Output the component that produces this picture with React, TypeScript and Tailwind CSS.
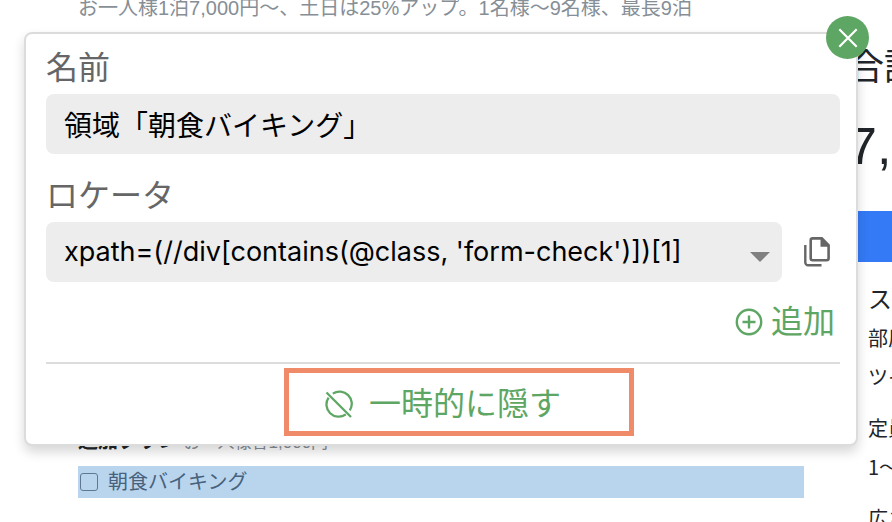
import { useState } from 'react'

const locators = ["xpath=(//div[contains(@class, 'form-check')])[1]"]

function CopyIcon() {
  return (
    <svg viewBox="0 0 26 30" className="h-[30px] w-[26px]" fill="none" aria-hidden="true">
      <path d="M1.3 8v17.5a2.8 2.8 0 0 0 2.8 2.8H17.5" stroke="#666" strokeWidth="2.4" />
      <path
        d="M8.7 1.4h9.1l6.8 6.8v13a2 2 0 0 1-2 2H8.7a2 2 0 0 1-2-2V3.4a2 2 0 0 1 2-2z"
        stroke="#666"
        strokeWidth="2.6"
      />
      <path d="M16.5 1v8.8H25L17.8 1z" fill="#666" />
    </svg>
  )
}

function AddIcon() {
  return (
    <svg viewBox="0 0 28 28" className="size-7" fill="none" stroke="currentColor" strokeWidth="2.4" aria-hidden="true">
      <circle cx="14" cy="14" r="12.2" />
      <path d="M14 7.5v13M7.5 14h13" />
    </svg>
  )
}

function HideIcon() {
  return (
    <svg viewBox="0 0 28 28" className="size-7" fill="none" stroke="currentColor" strokeWidth="2.3" aria-hidden="true">
      <path d="M1.5 2.5 26 27" />
      <path d="M7.8 3.6A12.2 12.2 0 0 1 24.8 20.4" />
      <path d="M3.6 7.6A12.2 12.2 0 0 0 20.8 24.4" />
    </svg>
  )
}

function ReservePage() {
  return (
    <>
      <main className="min-w-0 flex-1 pr-11 pl-[78px] text-[20px] whitespace-nowrap">
        <p className="leading-4 text-[#868e96]">
          お一人様1泊7,000円〜、土日は25%アップ。1名様〜9名様、最長9泊
        </p>
        <h3 className="mt-[410px] h-[30px] leading-[30px] font-bold text-[#212529]">
          追加プラン <small className="text-[17px] font-normal text-[#868e96]">お一人様各1,000円</small>
        </h3>
        <label className="mt-[10px] flex h-8 items-center gap-2.5 bg-[#b9d5ee] pl-0.5 text-[#48617c]">
          <input
            type="checkbox"
            className="size-[18px] appearance-none rounded-[3px] border border-[#5f7891] checked:bg-[#5f7891]"
          />
          朝食バイキング
        </label>
      </main>

      <aside className="w-11 shrink-0 overflow-hidden pt-12 whitespace-nowrap text-[#212529]">
        <p className="text-[36px] leading-10">合計</p>
        <p className="mt-7 text-[52px] leading-[60px]">7,000円</p>
        <button type="button" aria-label="予約" className="mt-[35px] block h-[51px] w-full bg-[#347af6]" />
        <div className="pl-5 font-['Noto_Sans_CJK_JP',sans-serif] text-[20px] leading-[39px]">
          <h2 className="mt-5 text-[24px] leading-8 font-normal">スタンダードツイン</h2>
          <dl className="mt-1 space-y-3">
            <div>
              <dt>部屋</dt>
              <dd>ツイン</dd>
            </div>
            <div>
              <dt>定員</dt>
              <dd>1〜2</dd>
            </div>
            <div>
              <dt>広さ</dt>
            </div>
          </dl>
        </div>
      </aside>
    </>
  )
}

function LocatorPopup({ onClose }: { onClose: () => void }) {
  const [name, setName] = useState('領域「朝食バイキング」')

  return (
    <section className="absolute top-8 right-[34px] left-6 rounded-lg border-2 border-[#dcdcdc] bg-white pt-2 pr-4 pb-2 pl-5 shadow-[0_6px_12px_rgba(0,0,0,0.16)]">
      <button
        type="button"
        aria-label="閉じる"
        onClick={onClose}
        className="absolute -top-[18px] -right-[13px] flex size-[43px] items-center justify-center rounded-full bg-[#5ea664] text-white"
      >
        <svg viewBox="0 0 20 20" className="size-5" stroke="currentColor" strokeWidth="2.2" aria-hidden="true">
          <path d="M1.3 1.3 18.7 18.7M18.7 1.3 1.3 18.7" />
        </svg>
      </button>

      <label htmlFor="name" className="block text-[32px] leading-[52px] text-[#666]">
        名前
      </label>
      <input
        id="name"
        value={name}
        onChange={(e) => setName(e.target.value)}
        className="block h-[60px] w-full rounded-lg bg-[#ededed] px-[18px] text-[28px] text-black outline-none"
      />

      <label htmlFor="locator" className="mt-4 block text-[32px] leading-[52px] text-[#666]">
        ロケータ
      </label>
      <div className="flex items-center gap-[22px]">
        <div className="relative min-w-0 flex-1">
          <select
            id="locator"
            className="block h-[60px] w-full appearance-none rounded-lg bg-[#ededed] px-[18px] font-['Inter','Noto_Sans_CJK_JP',sans-serif] text-[27px] text-black outline-none"
          >
            {locators.map((locator) => (
              <option key={locator}>{locator}</option>
            ))}
          </select>
          <svg
            viewBox="0 0 20 10"
            className="pointer-events-none absolute top-[30px] right-3 h-2.5 w-5"
            fill="#808080"
            aria-hidden="true"
          >
            <path d="M0 0h20L10 10z" />
          </svg>
        </div>
        <button type="button" aria-label="コピー" className="mr-2.5 shrink-0">
          <CopyIcon />
        </button>
      </div>

      <div className="flex h-20 items-center justify-end pr-[5px]">
        <button type="button" className="flex items-center gap-2 text-[32px] leading-10 text-[#5ea664]">
          <AddIcon />
          追加
        </button>
      </div>

      <div className="relative border-t-2 border-[#dcdcdc] pt-1">
        <button
          type="button"
          className="flex h-[68px] w-full items-center justify-center gap-4 pt-1 text-[32px] text-[#5ea664]"
        >
          <HideIcon />
          一時的に隠す
        </button>
        <div className="pointer-events-none absolute top-1 right-[26%] bottom-0 left-[30%] border-5 border-[#ef8b68]" />
      </div>
    </section>
  )
}

export default function App() {
  const [open, setOpen] = useState(true)

  return (
    <div className="relative flex h-screen overflow-hidden bg-white font-['Liberation_Sans','Noto_Sans_CJK_JP',sans-serif]">
      <ReservePage />
      {open && <LocatorPopup onClose={() => setOpen(false)} />}
    </div>
  )
}
